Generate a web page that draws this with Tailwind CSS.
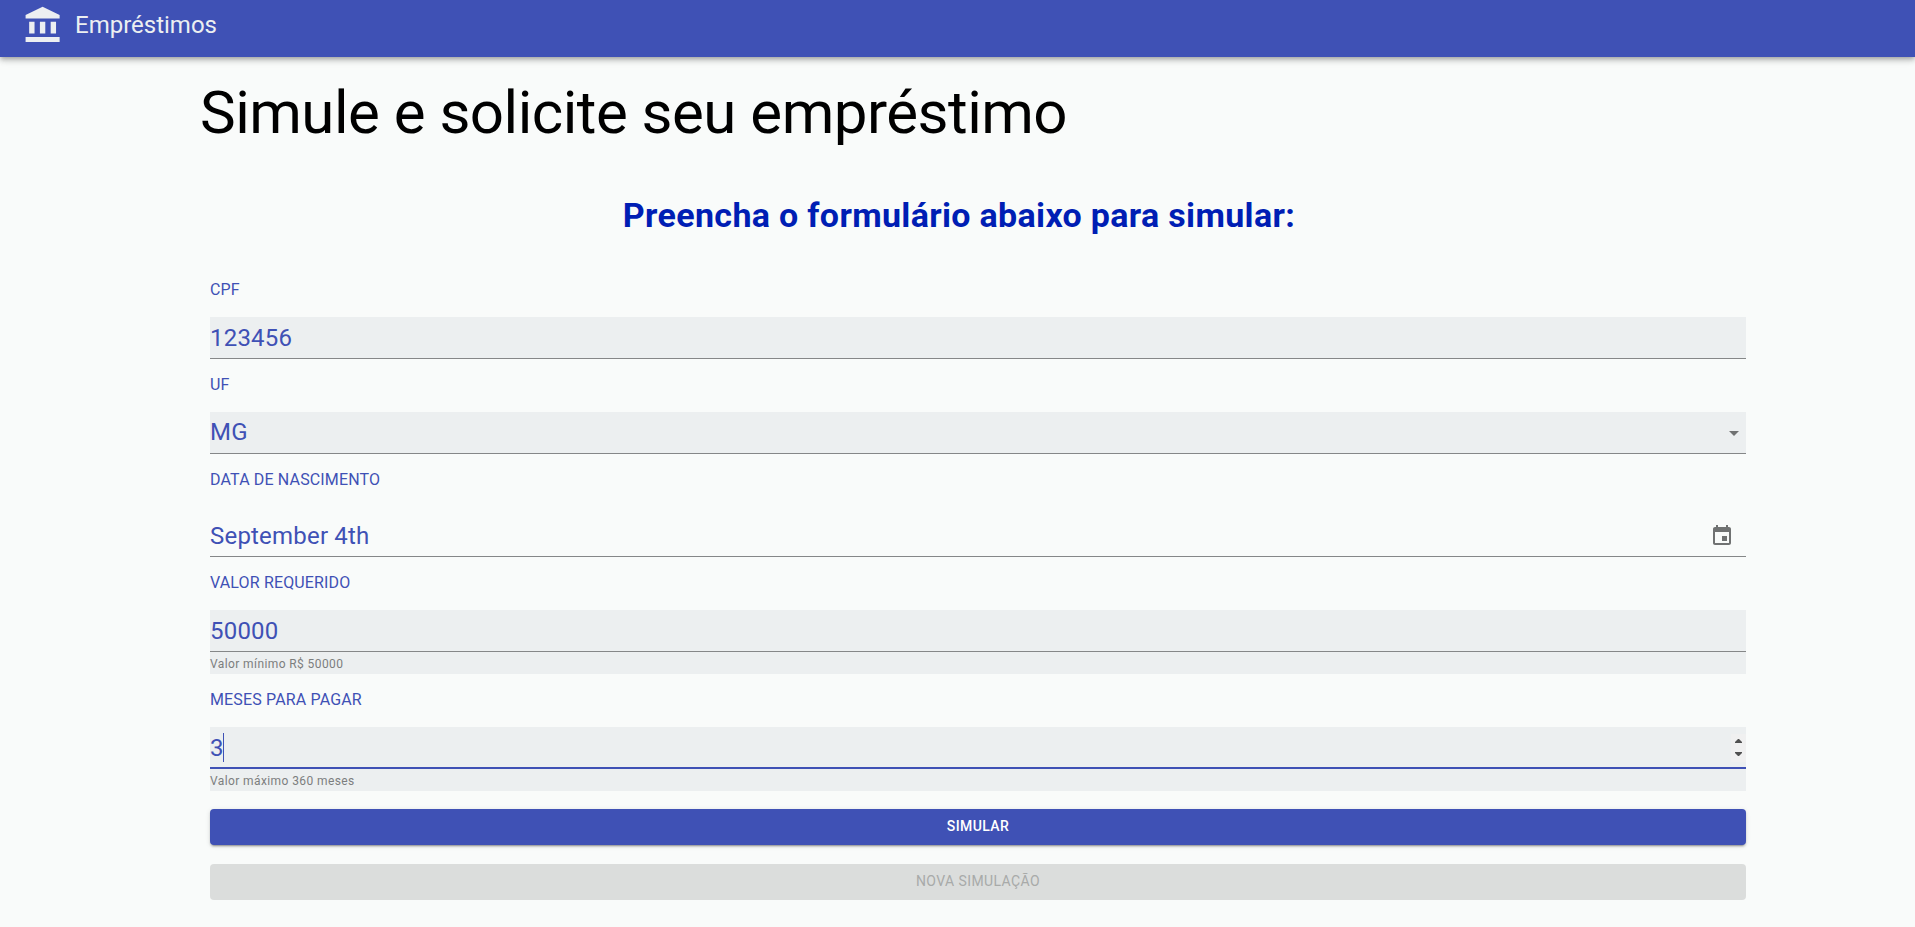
<!DOCTYPE html>
<html lang="pt-BR">
<head>
<meta charset="utf-8">
<title>Empréstimos</title>
<script src="https://cdn.jsdelivr.net/npm/@tailwindcss/browser@4"></script>
</head>
<body class="h-screen overflow-hidden bg-[#f9fbfa] font-[Roboto,sans-serif] text-[#3f51b5]">
<header class="relative flex h-[57px] items-start bg-[#3f51b5] pl-[22.4px] text-[#eceff1] shadow-[0_2px_4px_-1px_rgba(0,0,0,0.2),0_4px_5px_0_rgba(0,0,0,0.14),0_1px_10px_0_rgba(0,0,0,0.12)]">
  <svg class="mt-[5px] h-[40.4px] w-[43px]" viewBox="0 0 24 24" preserveAspectRatio="none" fill="currentColor"><path d="M4 10v7h3v-7H4zm6 0v7h3v-7h-3zM2 22h19v-3H2v3zm14-12v7h3v-7h-3zm-4.500-9L2 6v2h19V6l-9.500-5z"/></svg>
  <span class="ml-[9.6px] mt-[9px] text-2xl leading-8">Empréstimos</span>
</header>
<main class="ml-[210px] w-[1536px]">
  <h1 class="-ml-[10px] pt-5 text-[60px] leading-[72px] tracking-[-0.5px] text-black">Simule e solicite seu empréstimo</h1>
  <h2 class="mt-[45px] -ml-[38px] text-center text-[34px] font-bold leading-[42px] tracking-[0.33px] text-[#001eb4]">Preencha o formulário abaixo para simular:</h2>
  <form>
    <div>
      <label class="block h-[81px] pt-[42px] text-base leading-6 tracking-[0.15px]">CPF</label>
      <div class="flex h-[42px] items-center border-b border-[#858788] bg-[#eceff0] text-2xl tracking-[0.2px]">123456</div>
    </div>
    <div>
      <label class="block h-[53px] pt-[14px] text-base leading-6 tracking-[0.15px]">UF</label>
      <div class="flex h-[42px] items-center justify-between border-b border-[#858788] bg-[#eceff0] pb-px text-2xl tracking-[0.2px]">MG
        <svg class="mt-[2px] size-6 text-[#707272]" viewBox="0 0 24 24" fill="currentColor"><path d="M7 10l5 5 5-5z"/></svg>
      </div>
    </div>
    <div>
      <label class="block h-[53px] pt-[14px] text-base leading-6 tracking-[0.15px]">DATA DE NASCIMENTO</label>
      <div class="flex h-[50px] items-center justify-between border-b border-[#858788] pr-3 pt-[9px] text-2xl tracking-[0.2px]">September 4th
        <svg class="size-6 text-[#707272]" viewBox="0 0 24 24" fill="currentColor"><path d="M17 12h-5v5h5v-5zM16 1v2H8V1H6v2H5c-1.110 0-1.990.9-1.990 2L3 19c0 1.100.89 2 2 2h14c1.100 0 2-.9 2-2V5c0-1.100-.9-2-2-2h-1V1h-2zm3 18H5V8h14v11z"/></svg>
      </div>
    </div>
    <div>
      <label class="block h-[53px] pt-[14px] text-base leading-6 tracking-[0.15px]">VALOR REQUERIDO</label>
      <div class="flex h-[42px] items-center border-b border-[#858788] bg-[#eceff0] text-2xl tracking-[0.2px]">50000</div>
      <p class="h-[22px] bg-[#eceff0] pt-[2px] text-xs leading-5 tracking-[0.4px] text-[#7c7e7e]">Valor mínimo R$ 50000</p>
    </div>
    <div>
      <label class="block h-[53px] pt-[14px] text-base leading-6 tracking-[0.15px]">MESES PARA PAGAR</label>
      <div class="flex h-[42px] items-center border-b-2 border-[#3f51b5] bg-[#eceff0] pt-px text-2xl">3<span class="-ml-px h-[29px] w-px bg-[#3f51b5]"></span>
        <span class="ml-auto flex h-7 w-[15px] flex-col items-center justify-center gap-[9px] bg-[#f0f0f0] text-[#505050]">
          <svg class="h-1 w-[7px]" viewBox="0 0 7 4" fill="currentColor"><path d="M0 4h7V3L4 0H3L0 3z"/></svg>
          <svg class="h-1 w-[7px]" viewBox="0 0 7 4" fill="currentColor"><path d="M0 0h7v1L4 4H3L0 1z"/></svg>
        </span>
      </div>
      <p class="h-[22px] bg-[#eceff0] pt-[2px] text-xs leading-5 tracking-[0.4px] text-[#7c7e7e]">Valor máximo 360 meses</p>
    </div>
    <button type="button" class="mt-[18px] block h-9 w-full rounded bg-[#3f51b5] pb-[2px] text-sm font-medium tracking-[0.4px] text-white shadow-[0_3px_1px_-2px_rgba(0,0,0,0.2),0_2px_2px_0_rgba(0,0,0,0.14),0_1px_5px_0_rgba(0,0,0,0.12)]">SIMULAR</button>
    <button type="button" disabled class="mt-[19px] block h-9 w-full rounded bg-[#dbdddc] pb-[2px] text-sm tracking-[0.4px] text-[#a8aaa9]">NOVA SIMULAÇÃO</button>
  </form>
</main>
</body>
</html>
